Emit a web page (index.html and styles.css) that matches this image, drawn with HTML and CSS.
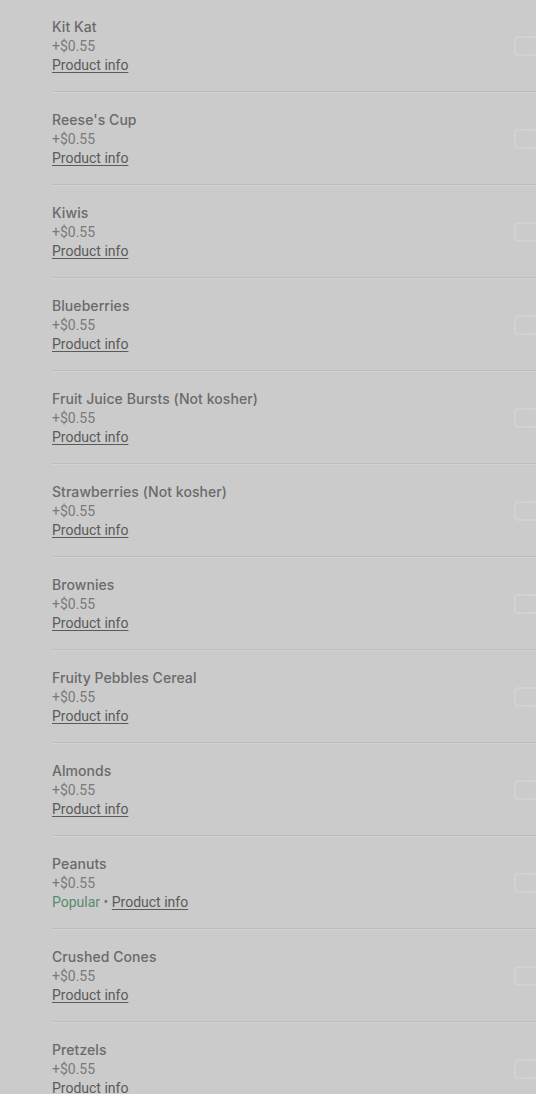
FILE: index.html
```html
<!DOCTYPE html>
<html>
<head>
<meta charset="utf-8">
<link rel="stylesheet" href="styles.css">
</head>
<body>
<div class="list">
  <div class="item"><div class="info"><div class="name">Kit Kat</div><div class="price">+$0.55</div><div class="meta"><a class="link">Product info</a></div></div><div class="check"></div></div>
  <div class="item"><div class="info"><div class="name">Reese's Cup</div><div class="price">+$0.55</div><div class="meta"><a class="link">Product info</a></div></div><div class="check"></div></div>
  <div class="item"><div class="info"><div class="name">Kiwis</div><div class="price">+$0.55</div><div class="meta"><a class="link">Product info</a></div></div><div class="check"></div></div>
  <div class="item"><div class="info"><div class="name">Blueberries</div><div class="price">+$0.55</div><div class="meta"><a class="link">Product info</a></div></div><div class="check"></div></div>
  <div class="item"><div class="info"><div class="name">Fruit Juice Bursts (Not kosher)</div><div class="price">+$0.55</div><div class="meta"><a class="link">Product info</a></div></div><div class="check"></div></div>
  <div class="item"><div class="info"><div class="name">Strawberries (Not kosher)</div><div class="price">+$0.55</div><div class="meta"><a class="link">Product info</a></div></div><div class="check"></div></div>
  <div class="item"><div class="info"><div class="name">Brownies</div><div class="price">+$0.55</div><div class="meta"><a class="link">Product info</a></div></div><div class="check"></div></div>
  <div class="item"><div class="info"><div class="name">Fruity Pebbles Cereal</div><div class="price">+$0.55</div><div class="meta"><a class="link">Product info</a></div></div><div class="check"></div></div>
  <div class="item"><div class="info"><div class="name">Almonds</div><div class="price">+$0.55</div><div class="meta"><a class="link">Product info</a></div></div><div class="check"></div></div>
  <div class="item"><div class="info"><div class="name">Peanuts</div><div class="price">+$0.55</div><div class="meta"><span class="popular">Popular</span><span class="dot"> • </span><a class="link">Product info</a></div></div><div class="check"></div></div>
  <div class="item"><div class="info"><div class="name">Crushed Cones</div><div class="price">+$0.55</div><div class="meta"><a class="link">Product info</a></div></div><div class="check"></div></div>
  <div class="item"><div class="info"><div class="name">Pretzels</div><div class="price">+$0.55</div><div class="meta"><a class="link">Product info</a></div></div><div class="check"></div></div>
</div>
</body>
</html>
```
FILE: styles.css
```css
html, body {
  margin: 0;
  padding: 0;
  overflow: hidden;
  background: #cbcbcb;
}
body {
  font-family: Roboto, "Liberation Sans", sans-serif;
  font-size: 14px;
  color: #666;
}
.list {
  margin-top: -1px;
  padding-left: 52px;
}
.item {
  width: 486px;
  display: flex;
  align-items: center;
  justify-content: space-between;
  padding: 18px 0 16px;
  border-bottom: 1px solid #bdbdbd;
  box-shadow: 0 1px 0 #d3d3d3;
}
.name {
  font-family: Inter, Roboto, sans-serif;
  letter-spacing: 0.07px;
  line-height: 19px;
  font-weight: 500;
  color: #6a6a6a;
}
.price {
  line-height: 20px;
  color: #7a7a7a;
}
.meta {
  line-height: 19px;
}
.link {
  color: #5a5a5a;
  text-decoration: underline;
  text-underline-offset: 2px;
}
.popular {
  color: #5a8a6e;
}
.dot {
  color: #777;
}
.check {
  width: 20px;
  height: 16px;
  border: 2px solid #d2d2d2;
  border-radius: 4px;
}
```
